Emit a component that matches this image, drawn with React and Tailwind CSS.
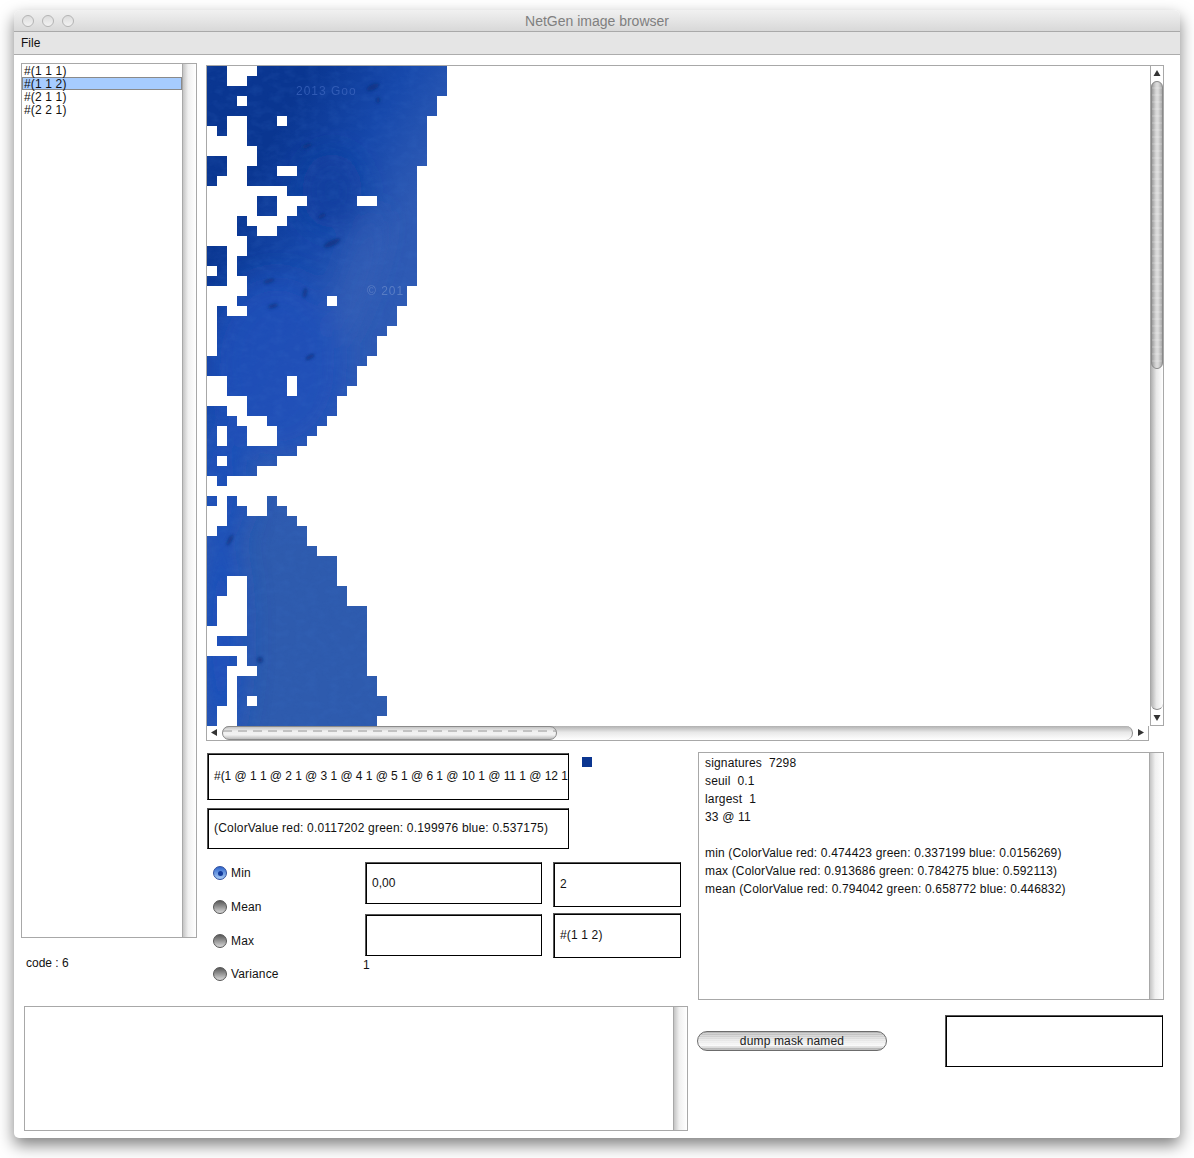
const MASK_ROWS = [
  [[0,2],[5,24]], [[0,2],[4,24]], [[0,24]], [[0,3],[4,23]], [[0,23]],
  [[0,2],[4,7],[8,22]], [[1,2],[4,22]], [[4,22]], [[5,22]], [[0,2],[5,22]],
  [[0,2],[4,7],[9,21]], [[0,1],[4,21]], [[8,21]], [[5,7],[10,15],[17,21]], [[5,7],[9,21]],
  [[3,4],[8,21]], [[3,5],[7,21]], [[4,21]], [[0,2],[4,21]], [[0,2],[3,21]],
  [[1,2],[3,21]], [[0,2],[4,21]], [[4,20]], [[3,12],[13,20]], [[1,2],[4,19]],
  [[1,19]], [[1,18]], [[1,17]], [[1,17]], [[0,16]],
  [[0,15]], [[2,8],[9,15]], [[2,8],[9,14]], [[4,13]], [[0,2],[4,13]],
  [[0,3],[6,12]], [[0,1],[2,4],[7,11]], [[0,1],[2,4],[7,10]], [[0,9]], [[0,1],[2,7]],
  [[0,5]], [[1,2]], [], [[0,1],[2,3],[6,7]], [[2,4],[6,8]],
  [[2,9]], [[1,10]], [[0,10]], [[0,11]], [[0,13]],
  [[0,13]], [[0,2],[4,13]], [[0,2],[4,14]], [[0,1],[4,14]], [[0,1],[4,16]],
  [[0,1],[4,16]], [[4,16]], [[1,16]], [[4,16]], [[0,3],[4,16]],
  [[0,2],[5,16]], [[0,2],[3,17]], [[0,2],[3,17]], [[0,2],[3,4],[5,18]], [[0,1],[3,18]],
  [[0,1],[3,17]],
];

const maskPath = MASK_ROWS.map((spans, r) =>
  spans.map(([a, b]) => `M${a * 10} ${r * 10}H${b * 10}V${r * 10 + 10}H${a * 10}Z`).join("")
).join("");

const SPECKS = [
  [166, 21, 7, 3, -25], [171, 34, 2, 3, 0], [125, 177, 9, 3, -25], [98, 227, 2, 5, 10],
  [103, 291, 5, 2, -30], [53, 594, 3, 3, 30], [23, 474, 2, 6, 30], [100, 80, 5, 2, -20],
  [62, 215, 6, 2, -15], [66, 240, 5, 2, -15], [115, 150, 4, 2, -30],
];

const MaskImage = () => (
  <svg width="240" height="660" className="block">
    <defs>
      <clipPath id="mask">
        <path d={maskPath} />
      </clipPath>
      <linearGradient id="base" gradientUnits="userSpaceOnUse" x1="55" y1="90" x2="190" y2="165">
        <stop offset="0" stopColor="#0a3691" />
        <stop offset="0.55" stopColor="#1749ac" />
        <stop offset="1" stopColor="#2e5ab4" />
      </linearGradient>
      <linearGradient id="lower" gradientUnits="userSpaceOnUse" x1="0" y1="340" x2="0" y2="490">
        <stop offset="0" stopColor="#2e5bae" stopOpacity="0" />
        <stop offset="1" stopColor="#2e5bae" />
      </linearGradient>
      <filter id="soft" x="-50%" y="-50%" width="200%" height="200%">
        <feGaussianBlur stdDeviation="14" />
      </filter>
      <filter id="speck" x="-50%" y="-50%" width="200%" height="200%">
        <feGaussianBlur stdDeviation="1.4" />
      </filter>
      <filter id="grain">
        <feTurbulence type="fractalNoise" baseFrequency="0.09 0.14" numOctaves="3" seed="4" />
        <feColorMatrix values="0 0 0 0 0.05  0 0 0 0 0.18  0 0 0 0 0.6  1.6 0 0 0 -0.62" />
      </filter>
    </defs>
    <g clipPath="url(#mask)">
      <rect width="240" height="660" fill="url(#base)" />
      <rect width="240" height="660" fill="url(#lower)" />
      <g filter="url(#soft)">
        <ellipse cx="125" cy="125" rx="30" ry="38" fill="#0f3c9c" opacity="0.75" />
        <ellipse cx="70" cy="300" rx="70" ry="90" fill="#1c50b8" opacity="0.85" />
        <ellipse cx="14" cy="420" rx="26" ry="60" fill="#1c50b8" />
        <ellipse cx="14" cy="570" rx="22" ry="110" fill="#1a50bb" />
        <ellipse cx="150" cy="210" rx="12" ry="70" fill="#3a63b8" opacity="0.6" transform="rotate(18 150 210)" />
      </g>
      <rect width="240" height="660" filter="url(#grain)" opacity="0.2" />
      <g filter="url(#speck)" fill="#0a2c7c">
        {SPECKS.map(([cx, cy, rx, ry, rot]) => (
          <ellipse key={`${cx}-${cy}`} cx={cx} cy={cy} rx={rx} ry={ry} transform={`rotate(${rot} ${cx} ${cy})`} opacity="0.7" />
        ))}
      </g>
      <text x="89" y="29" fontFamily="Liberation Sans" fontSize="12" letterSpacing="1" fill="#3f68c0" opacity="0.7">2013 Goo</text>
      <text x="160" y="229" fontFamily="Liberation Sans" fontSize="12" letterSpacing="1" fill="#6c8ccb" opacity="0.7">© 201</text>
    </g>
  </svg>
);

const Arrow = ({ points }) => (
  <svg width="13" height="15" viewBox="0 0 13 15" className="block shrink-0">
    <polygon points={points} fill="#333" />
  </svg>
);

const ArrowH = ({ points }) => (
  <svg width="15" height="13" viewBox="0 0 15 13" className="block shrink-0">
    <polygon points={points} fill="#333" />
  </svg>
);

const VScrollBar = () => (
  <div className="w-[14px] shrink-0 flex flex-col border border-[#a8a8a8] bg-white">
    <Arrow points="6,4 9.5,10 2.5,10" />
    <div className="flex-1 flex flex-col rounded-full border-b border-[#8a8a8a] bg-[linear-gradient(to_right,#b0b0b0,#e8e8e8_45%,#fff)]">
      <div className="h-[288px] rounded-full border border-[#8a8a8a] bg-[repeating-linear-gradient(to_bottom,transparent_0,transparent_5px,rgba(255,255,255,0.14)_5px,rgba(255,255,255,0.14)_7px),linear-gradient(to_right,#9c9c9c,#d8d8d8_40%,#dcdcdc_60%,#a8a8a8)]" />
    </div>
    <Arrow points="2.5,5 9.5,5 6,11" />
  </div>
);

const HScrollBar = () => (
  <div className="h-[15px] w-[943px] flex border-l border-r border-b border-[#a8a8a8] bg-white">
    <ArrowH points="4,6.5 10,3 10,10" />
    <div className="flex-1 flex rounded-full border-r border-[#8a8a8a] bg-[linear-gradient(to_bottom,#b0b0b0,#e8e8e8_45%,#fff)]">
      <div className="w-[335px] rounded-full border border-[#8a8a8a] [background:repeating-linear-gradient(to_right,#c2c2c2_0,#c2c2c2_9px,transparent_9px,transparent_15px)_0_3px/100%_2px_no-repeat,linear-gradient(to_bottom,#c4c4c4,#f0f0f0_35%,#f2f2f2_65%,#bcbcbc)]" />
    </div>
    <ArrowH points="5,3 11,6.5 5,10" />
  </div>
);

const Track = () => (
  <div className="w-[14px] shrink-0 border-l border-[#a8a8a8] bg-[linear-gradient(to_right,#c4c4c4,#f0f0f0_40%,#fff)]" />
);

const Field = ({ className, children }) => (
  <div className={`flex items-center border border-black border-t-[#555] border-l-[#555] shadow-[inset_1px_1px_0_#000] bg-white pl-[6px] overflow-hidden whitespace-pre ${className}`}>
    {children}
  </div>
);

const Radio = ({ label, checked, className = "" }) => (
  <div className={`flex items-center h-[20px] ${className}`}>
    {checked ? (
      <span className="w-[14px] h-[14px] rounded-full border border-[#2c4c9c] flex items-center justify-center bg-[linear-gradient(to_bottom,#2f66cc,#a8cbf5)]">
        <span className="w-[5px] h-[5px] rounded-full bg-[#123a9c]" />
      </span>
    ) : (
      <span className="w-[14px] h-[14px] rounded-full border border-[#555] bg-[linear-gradient(to_bottom,#5a5a5a,#8a8a8a_40%,#d8d8d8)]" />
    )}
    <span className="ml-[4px] tracking-[0.15px]">{label}</span>
  </div>
);

const Light = () => (
  <span className="w-[12px] h-[12px] rounded-full border border-[#b4b4b4] bg-[linear-gradient(to_bottom,#dcdcdc,#f2f2f2)]" />
);

const STATS = [
  "signatures  7298",
  "seuil  0.1",
  "largest  1",
  "33 @ 11",
  " ",
  "min (ColorValue red: 0.474423 green: 0.337199 blue: 0.0156269)",
  "max (ColorValue red: 0.913686 green: 0.784275 blue: 0.592113)",
  "mean (ColorValue red: 0.794042 green: 0.658772 blue: 0.446832)",
];

export default function App() {
  return (
    <div className="w-[1194px] h-[1158px] bg-white pt-[10px] pl-[14px] overflow-hidden font-['Liberation_Sans',Arial,sans-serif] text-[12px] leading-[14px] text-[#111]">
      <div className="w-[1166px] h-[1128px] flex flex-col rounded-t-[6px] rounded-b-[5px] bg-white shadow-[0_7px_16px_rgba(0,0,0,0.5)]">
        {/* title bar */}
        <div className="h-[22px] flex items-center relative rounded-t-[6px] border-b border-[#a9a9a9] bg-[linear-gradient(to_bottom,#f1f1f1,#d8d8d8)]">
          <div className="flex gap-[8px] pl-[8px]">
            <Light />
            <Light />
            <Light />
          </div>
          <span className="absolute inset-x-0 text-center text-[14px] text-[#7f7f7f]">NetGen image browser</span>
        </div>
        {/* menu */}
        <div className="h-[23px] flex items-center pl-[7px] border-b border-[#acacac] bg-[#e5e5e5]">File</div>

        <div className="flex h-[943px] mt-[8px]">
          {/* left column */}
          <div className="ml-[7px] w-[176px]">
            <div className="h-[875px] flex border border-[#a8a8a8]">
              <div className="flex-1 tracking-[0.15px]">
                <div className="h-[13px] pl-[2px]">#(1 1 1)</div>
                <div className="h-[13px] pl-[1px] border border-[#8a8a8a] bg-[#a6ccff] leading-[13px]">#(1 1 2)</div>
                <div className="h-[13px] pl-[2px]">#(2 1 1)</div>
                <div className="h-[13px] pl-[2px]">#(2 2 1)</div>
              </div>
              <Track />
            </div>
            <div className="mt-[18px] pl-[5px]">code : 6</div>
          </div>

          {/* right column */}
          <div className="ml-[9px] mt-[2px] w-[958px]">
            <div className="flex h-[661px]">
              <div className="w-[944px] bg-white border-l border-t border-[#a8a8a8]">
                <MaskImage />
              </div>
              <VScrollBar />
            </div>
            <HScrollBar />

            <div className="flex mt-[11px]">
              <div className="ml-[1px] w-[474px] pt-[1px]">
                <div className="flex items-start">
                  <Field className="w-[362px] h-[47px] pb-[2px] tracking-[-0.04px]">
                    #(1 @ 1 1 @ 2 1 @ 3 1 @ 4 1 @ 5 1 @ 6 1 @ 10 1 @ 11 1 @ 12 1
                  </Field>
                  <span className="ml-[13px] mt-[4px] w-[10px] h-[10px] bg-[#0b3590]" />
                </div>
                <Field className="w-[362px] h-[41px] mt-[8px] pb-[2px] tracking-[0.19px]">
                  (ColorValue red: 0.0117202 green: 0.199976 blue: 0.537175)
                </Field>
                <div className="flex mt-[13px]">
                  <div className="w-[158px] pl-[6px] pt-[1px] flex flex-col gap-[14px]">
                    <Radio label="Min" checked />
                    <Radio label="Mean" />
                    <Radio label="Max" />
                    <Radio label="Variance" className="-mt-[1px]" />
                  </div>
                  <div className="w-[177px]">
                    <Field className="h-[42px]">0,00</Field>
                    <Field className="h-[42px] mt-[10px]" />
                    <div className="mt-[2px] -ml-[2px]">1</div>
                  </div>
                  <div className="ml-[11px] w-[128px]">
                    <Field className="h-[45px] pb-[2px]">2</Field>
                    <Field className="h-[45px] mt-[6px] pb-[2px] tracking-[0.15px]">#(1 1 2)</Field>
                  </div>
                </div>
              </div>
              <div className="ml-[17px] w-[466px] h-[248px] flex border border-[#a8a8a8]">
                <div className="flex-1 pl-[6px] pt-[1px] leading-[18px] whitespace-pre tracking-[0.16px]">
                  {STATS.map((line, i) => (
                    <div key={i}>{line}</div>
                  ))}
                </div>
                <Track />
              </div>
            </div>
          </div>
        </div>

        {/* bottom row */}
        <div className="flex items-start">
          <div className="ml-[10px] w-[664px] h-[125px] flex border border-[#a8a8a8]">
            <div className="flex-1" />
            <Track />
          </div>
          <button className="ml-[9px] mt-[25px] w-[190px] h-[20px] rounded-full border border-[#6c6c6c] text-[12px] leading-none tracking-[0.15px] text-[#222] bg-[repeating-linear-gradient(to_bottom,transparent_0,transparent_1px,rgba(255,255,255,0.3)_1px,rgba(255,255,255,0.3)_2px),linear-gradient(to_bottom,#b4b4b4,#e6e6e6_45%,#f8f8f8_75%,#9a9a9a)]">
            dump mask named
          </button>
          <Field className="ml-[58px] mt-[9px] w-[218px] h-[52px]" />
        </div>
      </div>
    </div>
  );
}
